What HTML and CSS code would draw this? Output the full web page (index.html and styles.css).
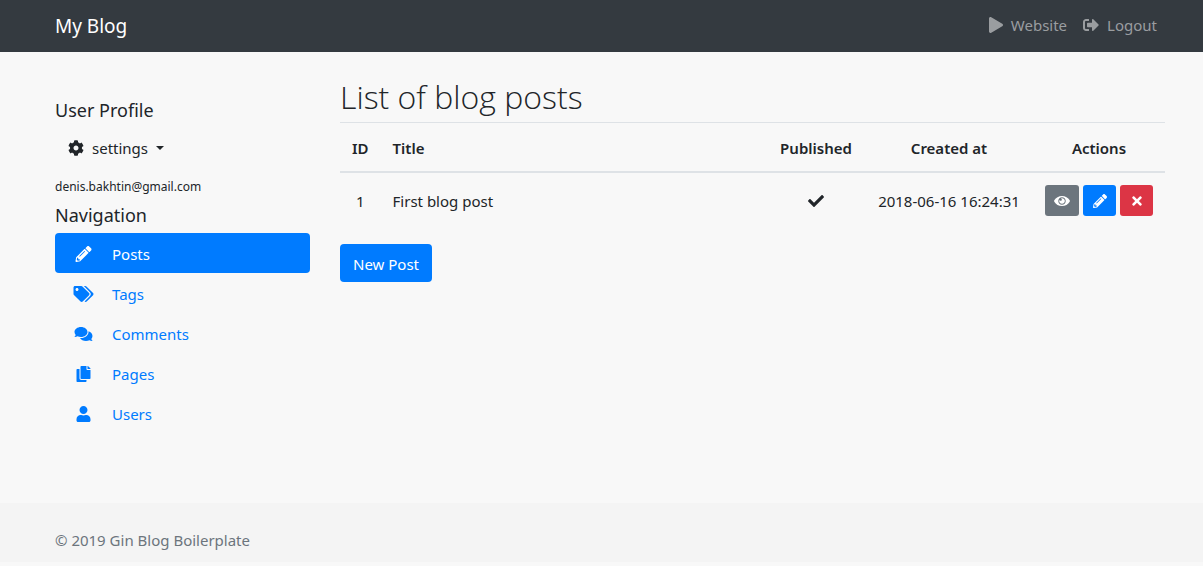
FILE: index.html
```html
<!DOCTYPE html>
<html lang="en">
<head>
<meta charset="utf-8">
<meta name="viewport" content="width=device-width, initial-scale=1">
<title>My Blog</title>
<link rel="stylesheet" href="styles.css">
</head>
<body>
<svg class="sprite" aria-hidden="true">
  <symbol id="play" viewBox="0 0 448 512"><path d="M424.4 214.7L72.4 6.6C43.8-10.3 0 6.1 0 47.9V464c0 37.5 40.7 60.1 72.4 41.3l352-208c31.4-18.5 31.5-64.1 0-82.6z"/></symbol>
  <symbol id="logout" viewBox="0 0 512 512"><path d="M497 273L329 441c-15 15-41 4.5-41-17v-96H152c-13.3 0-24-10.7-24-24v-96c0-13.3 10.7-24 24-24h136V88c0-21.4 25.9-32 41-17l168 168c9.3 9.4 9.3 24.6 0 34zM192 436v-40c0-6.6-5.4-12-12-12H96c-17.7 0-32-14.3-32-32V160c0-17.7 14.3-32 32-32h84c6.6 0 12-5.4 12-12V76c0-6.6-5.4-12-12-12H96c-53 0-96 43-96 96v192c0 53 43 96 96 96h84c6.6 0 12-5.4 12-12z"/></symbol>
  <symbol id="cog" viewBox="0 0 512 512"><path d="M487.4 315.7l-42.6-24.6c4.3-23.2 4.3-47 0-70.2l42.6-24.6c4.9-2.8 7.1-8.6 5.5-14-11.1-35.6-30-67.8-54.7-94.6-3.8-4.1-10-5.1-14.8-2.3L380.8 110c-17.9-15.4-38.5-27.3-60.8-35.1V25.8c0-5.6-3.9-10.5-9.4-11.7-36.7-8.2-74.3-7.8-109.2 0-5.5 1.2-9.4 6.1-9.4 11.7V75c-22.2 7.9-42.8 19.8-60.8 35.1L88.7 85.5c-4.9-2.8-11-1.9-14.8 2.3-24.7 26.7-43.6 58.9-54.7 94.6-1.7 5.4.6 11.2 5.5 14L67.3 221c-4.3 23.2-4.3 47 0 70.2l-42.6 24.6c-4.9 2.8-7.1 8.6-5.5 14 11.1 35.6 30 67.8 54.7 94.6 3.8 4.1 10 5.1 14.8 2.3l42.6-24.6c17.9 15.4 38.5 27.3 60.8 35.1v49.2c0 5.6 3.9 10.5 9.4 11.7 36.7 8.2 74.3 7.8 109.2 0 5.5-1.2 9.4-6.1 9.4-11.7v-49.2c22.2-7.9 42.8-19.8 60.8-35.1l42.6 24.6c4.9 2.8 11 1.9 14.8-2.3 24.7-26.7 43.6-58.9 54.7-94.6 1.5-5.5-.7-11.3-5.6-14.1zM256 336c-44.1 0-80-35.9-80-80s35.9-80 80-80 80 35.9 80 80-35.9 80-80 80z"/></symbol>
  <symbol id="pencil" viewBox="0 0 512 512"><path d="M497.9 142.1l-46.1 46.1c-4.7 4.7-12.3 4.7-17 0l-111-111c-4.7-4.7-4.7-12.3 0-17l46.1-46.1c18.7-18.7 49.1-18.7 67.9 0l60.1 60.1c18.8 18.7 18.8 49.1 0 67.9zM284.2 99.8L21.6 362.4.4 483.9c-2.9 16.4 11.4 30.6 27.8 27.8l121.5-21.3 262.6-262.6c4.7-4.7 4.7-12.3 0-17l-111-111c-4.8-4.7-12.4-4.7-17.1 0zM124.1 339.9c-5.5-5.5-5.5-14.3 0-19.8l154-154c5.5-5.5 14.3-5.5 19.8 0s5.5 14.3 0 19.8l-154 154c-5.5 5.5-14.3 5.5-19.8 0zM88 424h48v36.3l-64.5 11.3-31.1-31.1L51.7 376H88v48z"/></symbol>
  <symbol id="tags" viewBox="0 0 640 512"><path d="M497.941 225.941L286.059 14.059A48 48 0 0 0 252.118 0H48C21.49 0 0 21.49 0 48v204.118a48 48 0 0 0 14.059 33.941l211.882 211.882c18.744 18.745 49.136 18.746 67.882 0l204.118-204.118c18.745-18.745 18.745-49.137 0-67.882zM112 160c-26.51 0-48-21.49-48-48s21.49-48 48-48 48 21.49 48 48-21.49 48-48 48zm513.941 133.823L421.823 497.941c-18.745 18.745-49.137 18.745-67.882 0l-.36-.36L527.64 323.522c16.999-16.999 26.36-39.6 26.36-63.64s-9.362-46.641-26.36-63.64L331.397 0h48.721a48 48 0 0 1 33.941 14.059l211.882 211.882c18.745 18.745 18.745 49.137 0 67.882z"/></symbol>
  <symbol id="comments" viewBox="0 0 576 512"><path d="M416 192c0-88.4-93.1-160-208-160S0 103.6 0 192c0 34.3 14.1 65.9 38 92-13.4 30.2-35.5 54.2-35.8 54.5-2.2 2.3-2.8 5.7-1.5 8.7S4.8 352 8 352c36.6 0 66.9-12.3 88.7-25 32.2 15.7 70.3 25 111.3 25 114.9 0 208-71.6 208-160zm122 220c23.9-26 38-57.7 38-92 0-66.9-53.5-124.2-129.3-148.1.9 6.6 1.3 13.3 1.3 20.1 0 105.9-107.7 192-240 192-10.8 0-21.3-.8-31.7-1.9C207.8 439.6 281.8 480 368 480c41 0 79.1-9.2 111.3-25 21.8 12.7 52.1 25 88.7 25 3.2 0 6.1-1.9 7.3-4.8 1.3-2.9.7-6.3-1.5-8.7-.3-.3-22.4-24.2-35.8-54.5z"/></symbol>
  <symbol id="copy" viewBox="0 0 448 512"><path d="M320 448v40c0 13.255-10.745 24-24 24H24c-13.255 0-24-10.745-24-24V120c0-13.255 10.745-24 24-24h72v296c0 30.879 25.121 56 56 56h168zm0-344V0H152c-13.255 0-24 10.745-24 24v368c0 13.255 10.745 24 24 24h272c13.255 0 24-10.745 24-24V128H344c-13.2 0-24-10.8-24-24zm120.971-31.029L375.029 7.029A24 24 0 0 0 358.059 0H352v96h96v-6.059a24 24 0 0 0-7.029-16.97z"/></symbol>
  <symbol id="user" viewBox="0 0 448 512"><path d="M224 256c70.7 0 128-57.3 128-128S294.7 0 224 0 96 57.3 96 128s57.3 128 128 128zm89.6 32h-16.7c-22.2 10.2-46.9 16-72.9 16s-50.6-5.8-72.9-16h-16.7C60.2 288 0 348.2 0 422.4V464c0 26.5 21.5 48 48 48h352c26.5 0 48-21.5 48-48v-41.6c0-74.2-60.2-134.4-134.4-134.4z"/></symbol>
  <symbol id="check" viewBox="0 0 512 512"><path d="M173.898 439.404l-166.4-166.4c-9.997-9.997-9.997-26.206 0-36.204l36.203-36.204c9.997-9.998 26.207-9.998 36.204 0L192 312.69 432.095 72.596c9.997-9.997 26.207-9.997 36.204 0l36.203 36.204c9.997 9.997 9.997 26.206 0 36.204l-294.4 294.401c-9.998 9.997-26.207 9.997-36.204-.001z"/></symbol>
  <symbol id="times" viewBox="0 0 352 512"><path d="M242.72 256l100.07-100.07c12.28-12.28 12.28-32.19 0-44.48l-22.24-22.24c-12.28-12.28-32.19-12.28-44.48 0L176 189.28 75.93 89.21c-12.28-12.28-32.19-12.28-44.48 0L9.21 111.45c-12.28 12.28-12.28 32.19 0 44.48L109.28 256 9.21 356.07c-12.28 12.28-12.28 32.19 0 44.48l22.24 22.24c12.28 12.28 32.2 12.28 44.48 0L176 322.72l100.07 100.07c12.28 12.28 32.2 12.28 44.48 0l22.24-22.24c12.28-12.28 12.28-32.19 0-44.48L242.72 256z"/></symbol>
  <symbol id="eye" viewBox="0 0 576 512"><path d="M569.354 231.631C512.969 135.949 407.81 72 288 72 168.14 72 63.004 135.994 6.646 231.631a47.999 47.999 0 0 0 0 48.739C63.031 376.051 168.19 440 288 440c119.86 0 224.996-63.994 281.354-159.631a47.997 47.997 0 0 0 0-48.738zM288 392c-75.162 0-136-60.827-136-136 0-75.162 60.826-136 136-136 75.162 0 136 60.826 136 136 0 75.162-60.826 136-136 136zm104-136c0 57.438-46.562 104-104 104s-104-46.562-104-104c0-17.708 4.431-34.379 12.236-48.973l-.001.032c0 23.651 19.173 42.823 42.824 42.823s42.824-19.173 42.824-42.823c0-23.651-19.173-42.824-42.824-42.824l-.032.001C253.621 156.431 270.292 152 288 152c57.438 0 104 46.562 104 104z"/></symbol>
</svg>

<header class="navbar">
  <a class="brand" href="#">My Blog</a>
  <nav class="navbar-links" aria-label="Account">
    <a class="navbar-link" href="#"><svg class="icon icon-narrow" aria-hidden="true"><use href="#play"/></svg>Website</a>
    <a class="navbar-link" href="#"><svg class="icon" aria-hidden="true"><use href="#logout"/></svg>Logout</a>
  </nav>
</header>

<div class="layout">
  <aside class="sidebar">
    <h2 class="sidebar-title">User Profile</h2>
    <button class="settings" type="button" aria-haspopup="true"><svg class="icon" aria-hidden="true"><use href="#cog"/></svg>settings<span class="caret"></span></button>
    <p class="email">denis.bakhtin@gmail.com</p>
    <h2 class="sidebar-title">Navigation</h2>
    <nav class="menu" aria-label="Main">
      <a class="menu-link active" href="#" aria-current="page"><svg class="menu-icon" aria-hidden="true"><use href="#pencil"/></svg>Posts</a>
      <a class="menu-link" href="#"><svg class="menu-icon" aria-hidden="true"><use href="#tags"/></svg>Tags</a>
      <a class="menu-link" href="#"><svg class="menu-icon" aria-hidden="true"><use href="#comments"/></svg>Comments</a>
      <a class="menu-link" href="#"><svg class="menu-icon" aria-hidden="true"><use href="#copy"/></svg>Pages</a>
      <a class="menu-link" href="#"><svg class="menu-icon" aria-hidden="true"><use href="#user"/></svg>Users</a>
    </nav>
  </aside>

  <main class="content">
    <h1 class="page-title">List of blog posts</h1>
    <table class="posts">
      <thead>
        <tr>
          <th class="col-id" scope="col">ID</th>
          <th class="col-title" scope="col">Title</th>
          <th class="col-published" scope="col">Published</th>
          <th class="col-created" scope="col">Created at</th>
          <th class="col-actions" scope="col">Actions</th>
        </tr>
      </thead>
      <tbody>
        <tr>
          <td>1</td>
          <td class="col-title">First blog post</td>
          <td><svg class="icon check" role="img" aria-label="Yes"><use href="#check"/></svg></td>
          <td>2018-06-16 16:24:31</td>
          <td>
            <div class="actions">
              <a class="action view" href="#" aria-label="View"><svg class="action-icon" aria-hidden="true"><use href="#eye"/></svg></a>
              <a class="action edit" href="#" aria-label="Edit"><svg class="action-icon" aria-hidden="true"><use href="#pencil"/></svg></a>
              <button class="action delete" type="button" aria-label="Delete"><svg class="action-icon" aria-hidden="true"><use href="#times"/></svg></button>
            </div>
          </td>
        </tr>
      </tbody>
    </table>
    <a class="new-post" href="#">New Post</a>
  </main>
</div>

<footer class="footer">© 2019 Gin Blog Boilerplate</footer>
</body>
</html>
```
FILE: styles.css
```css
* {
  box-sizing: border-box;
}

body {
  display: flex;
  flex-direction: column;
  min-height: 100vh;
  margin: 0;
  padding-bottom: 4px;
  background: #f8f8f8;
  color: #212529;
  font-family: "Noto Sans", "Open Sans", sans-serif;
  font-size: 15px;
  line-height: 24px;
}

a {
  color: #007bff;
  text-decoration: none;
}

button {
  border: 0;
  font: inherit;
  color: inherit;
  cursor: pointer;
}

.sprite {
  display: none;
}

.icon {
  width: 16px;
  height: 16px;
  fill: currentColor;
}

.icon-narrow {
  width: 14px;
}

.navbar {
  display: flex;
  align-items: center;
  justify-content: space-between;
  min-height: 52px;
  padding: 0 46px 0 55px;
  background: #343a40;
}

.brand {
  color: #fff;
  font-size: 19px;
}

.navbar-links {
  display: flex;
  gap: 16px;
  padding-bottom: 2px;
}

.navbar-link {
  display: flex;
  align-items: center;
  gap: 8px;
  color: #9a9da0;
}

.layout {
  display: grid;
  grid-template-columns: 255fr 825fr;
  gap: 30px;
  flex: 1;
  padding: 28px 38px 70px 55px;
}

.sidebar {
  padding-top: 18px;
}

.sidebar-title {
  margin: 0;
  font-size: 18px;
  font-weight: 400;
  line-height: 24px;
}

.settings {
  display: flex;
  align-items: center;
  gap: 8px;
  height: 38px;
  margin: 7px 0 8px;
  padding: 0 13px;
  background: transparent;
}

.caret {
  border: 4px solid transparent;
  border-top-color: currentColor;
  border-bottom: 0;
}

.email {
  margin: 0 0 4px;
  font-size: 12px;
}

.menu {
  margin-top: 6px;
}

.menu-link {
  display: flex;
  align-items: center;
  gap: 16px;
  padding: 9px 16px 7px;
  border-radius: 4px;
}

.menu-link.active {
  background: #007bff;
  color: #fff;
}

.menu-icon {
  width: 25px;
  height: 16px;
  fill: currentColor;
}

.page-title {
  margin: 0;
  padding-bottom: 8px;
  font-family: "Open Sans", "Noto Sans", sans-serif;
  font-size: 32px;
  font-weight: 300;
  line-height: 34px;
}

.posts {
  width: 100%;
  border-collapse: collapse;
  text-align: center;
}

.posts th,
.posts td {
  padding: 12px;
  border-top: 1px solid #dee2e6;
  white-space: nowrap;
}

.posts th {
  padding: 13px 12px 11px;
  border-bottom: 2px solid #dee2e6;
  font-weight: 600;
}

.posts td {
  border-top: 0;
}

.posts .col-title {
  width: 99%;
  text-align: left;
}

.col-published {
  min-width: 98px;
}

.col-created {
  min-width: 168px;
}

.check {
  display: block;
  margin: 0 auto;
}

.actions {
  display: flex;
  justify-content: center;
  gap: 4px;
}

.action {
  display: grid;
  place-items: center;
  width: 33px;
  height: 31px;
  padding: 0;
  border-radius: 3px;
  color: #fff;
}

.action-icon {
  width: 16px;
  height: 14px;
  fill: currentColor;
}

.view {
  width: 34px;
  background: #6c757d;
}

.edit {
  background: #007bff;
}

.delete {
  background: #dc3545;
}

.new-post {
  display: inline-block;
  margin-top: 16px;
  padding: 8px 13px 6px;
  border-radius: 4px;
  background: #007bff;
  color: #fff;
}

.footer {
  padding: 25px 55px 10px;
  background: #f4f4f4;
  color: #6c757d;
}
```
